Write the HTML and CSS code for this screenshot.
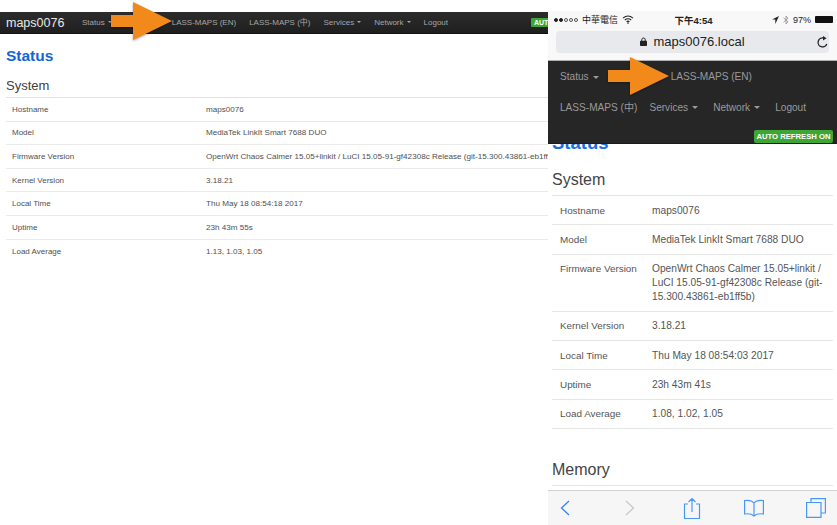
FILE: index.html
```html
<!DOCTYPE html>
<html lang="en">
<head>
<meta charset="utf-8">
<title>maps0076 status</title>
<link rel="stylesheet" href="styles.css">
</head>
<body>
<div class="stage">
  <section class="desktop">
    <nav class="dnav">
      <span class="brand">maps0076</span>
      <div class="dlinks">
        <span class="caret-item">Status</span>
        <span class="dgap">LASS-MAPS (EN)</span>
        <span>LASS-MAPS (中)</span>
        <span class="caret-item">Services</span>
        <span class="caret-item">Network</span>
        <span>Logout</span>
      </div>
      <span class="dbadge">AUTO REFRESH ON</span>
    </nav>
    <main class="dmain">
      <h1 class="dh1">Status</h1>
      <h2 class="dh2">System</h2>
      <div class="dtable">
        <div class="drow"><span class="dlabel">Hostname</span><span>maps0076</span></div>
        <div class="drow"><span class="dlabel">Model</span><span>MediaTek LinkIt Smart 7688 DUO</span></div>
        <div class="drow"><span class="dlabel">Firmware Version</span><span>OpenWrt Chaos Calmer 15.05+linkit / LuCI 15.05-91-gf42308c Release (git-15.300.43861-eb1ff5b)</span></div>
        <div class="drow"><span class="dlabel">Kernel Version</span><span>3.18.21</span></div>
        <div class="drow"><span class="dlabel">Local Time</span><span>Thu May 18 08:54:18 2017</span></div>
        <div class="drow"><span class="dlabel">Uptime</span><span>23h 43m 55s</span></div>
        <div class="drow"><span class="dlabel">Load Average</span><span>1.13, 1.03, 1.05</span></div>
      </div>
    </main>
    <svg class="arrow arrow-desktop" width="66" height="42" viewBox="0 0 66 42" aria-hidden="true"><path d="M2 15H24V2L63 21L24 40V27H2Z" fill="#f18a1b"/></svg>
  </section>

  <section class="phone">
    <div class="statusbar">
      <span class="sb-left"><span class="dots"><i class="on"></i><i class="on"></i><i></i><i></i><i></i></span>中華電信
        <svg width="12" height="9" viewBox="0 0 12 9" aria-hidden="true"><path d="M1 3.2C4 .6 8 .6 11 3.2M2.8 5C4.8 3.4 7.2 3.4 9.2 5M4.6 6.7C5.5 6 6.5 6 7.4 6.7" fill="none" stroke="#222" stroke-width="1.1"/><circle cx="6" cy="8.1" r=".8" fill="#222"/></svg>
      </span>
      <span class="sb-time">下午4:54</span>
      <span class="sb-right">
        <svg width="7" height="8" viewBox="0 0 7 8" aria-hidden="true"><path d="M7 0L0 3.4H3.3V8Z" fill="#222"/></svg>
        <svg width="6" height="10" viewBox="0 0 6 10" aria-hidden="true"><path d="M.5 2.8L5 6.8L3 9V1L5 3.2L.5 7.2" fill="none" stroke="#999" stroke-width=".9"/></svg>
        <span>97%</span>
        <span class="battery"></span>
      </span>
    </div>
    <div class="urlbar">
      <span class="url">
        <svg width="7" height="9" viewBox="0 0 8 10" aria-hidden="true"><path d="M2 4.5V3a2 2 0 0 1 4 0V4.5" fill="none" stroke="#222" stroke-width="1.1"/><rect y="4" width="8" height="6" rx=".8" fill="#222"/></svg>
        maps0076.local
      </span>
      <svg class="reload" width="12" height="12" viewBox="0 0 12 12" aria-hidden="true"><path d="M9.8 8A4.5 4.5 0 1 1 6.5 2" fill="none" stroke="#222" stroke-width="1.3"/><path d="M6 0L9.5 2.2L6 4.4Z" fill="#222"/></svg>
    </div>
    <nav class="mnav">
      <div class="mline">
        <span class="caret-item">Status</span>
        <span class="mgap">LASS-MAPS (EN)</span>
      </div>
      <div class="mline">
        <span class="mcjk">LASS-MAPS (中)</span>
        <span class="caret-item">Services</span>
        <span class="caret-item">Network</span>
        <span>Logout</span>
      </div>
      <div class="mbadge-row"><span class="mbadge">AUTO REFRESH ON</span></div>
    </nav>
    <main class="mmain">
      <h1 class="mh1">Status</h1>
      <h2 class="mh2">System</h2>
      <div class="mtable">
        <div class="mrow"><span class="mlabel">Hostname</span><span>maps0076</span></div>
        <div class="mrow"><span class="mlabel">Model</span><span>MediaTek LinkIt Smart 7688 DUO</span></div>
        <div class="mrow"><span class="mlabel">Firmware Version</span><span>OpenWrt Chaos Calmer 15.05+linkit / LuCI 15.05-91-gf42308c Release (git-15.300.43861-eb1ff5b)</span></div>
        <div class="mrow"><span class="mlabel">Kernel Version</span><span>3.18.21</span></div>
        <div class="mrow"><span class="mlabel">Local Time</span><span>Thu May 18 08:54:03 2017</span></div>
        <div class="mrow"><span class="mlabel">Uptime</span><span>23h 43m 41s</span></div>
        <div class="mrow"><span class="mlabel">Load Average</span><span>1.08, 1.02, 1.05</span></div>
      </div>
      <h2 class="mh2 memory">Memory</h2>
    </main>
    <div class="toolbar">
      <svg class="tb-back" width="20" height="16" viewBox="0 0 20 16" aria-hidden="true"><path d="M14 1L6.500 8L14 15" fill="none" stroke="#2f86f5" stroke-width="1.300"/></svg>
      <svg width="20" height="16" viewBox="0 0 20 16" aria-hidden="true"><path d="M6 1L13.500 8L6 15" fill="none" stroke="#c9c9c9" stroke-width="1.300"/></svg>
      <svg width="20" height="23" viewBox="0 0 20 23" aria-hidden="true"><path d="M6 7H2.500V21.500H17.500V7H14M10 15V1.500M6.500 5L10 1.500L13.500 5" fill="none" stroke="#4a97f7" stroke-width="1.200"/></svg>
      <svg width="20" height="19" viewBox="0 0 20 19" aria-hidden="true"><path d="M10 4C8 1.500 4 1 .6 1.500V15C4 14.500 8 15 10 17C12 15 16 14.500 19.400 15V1.500C16 1 12 1.500 10 4ZM10 4V17" fill="none" stroke="#4a97f7" stroke-width="1.200"/></svg>
      <svg width="20" height="20" viewBox="0 0 20 20" aria-hidden="true"><path d="M5 4.500V.6H19.400V15H15.500M.6 4.500H15V19.400H.6Z" fill="none" stroke="#4a97f7" stroke-width="1.200"/></svg>
    </div>
    <svg class="arrow arrow-phone" width="66" height="42" viewBox="0 0 66 42" aria-hidden="true"><path d="M2 15H24V2L63 21L24 40V27H2Z" fill="#f18a1b"/></svg>
  </section>
</div>
</body>
</html>
```
FILE: styles.css
```css
* { box-sizing: border-box; }
html, body { margin: 0; padding: 0; background: #fff; }
body { width: 837px; height: 525px; overflow: hidden; font-family: "Liberation Sans", "Noto Sans CJK TC", sans-serif; color: #444; }
h1, h2 { margin: 0; }
.stage { display: flex; width: 837px; height: 525px; }

.desktop { position: relative; width: 548px; height: 525px; overflow: hidden; padding-top: 12px; flex: none; }
.dnav { display: flex; align-items: center; height: 22px; background: linear-gradient(#2c2c2c, #1f1f1f); border-bottom: 1px solid #111; padding-left: 6px; white-space: nowrap; }
.brand { font-size: 12.500px; color: #e8e8e8; width: 76px; flex: none; }
.dlinks { display: flex; align-items: baseline; font-size: 8px; line-height: 10px; color: #a5a5a5; gap: 13px; flex: none; }
.dgap { margin-left: 47px; }
.dbadge { margin-left: 83px; flex: none; background: #3fa535; color: #fff; font-size: 7px; font-weight: 700; padding: 1px 3px; border-radius: 1px; }
.caret-item::after { content: ""; display: inline-block; margin-left: 3px; vertical-align: middle; border: 2px solid transparent; border-top-color: currentColor; border-bottom-width: 0; }

.dmain { padding: 12px 0 0 6px; }
.dh1 { font-size: 15.500px; line-height: 20px; color: #1464d6; }
.dh2 { font-size: 13px; line-height: 16px; font-weight: 400; color: #404040; margin-top: 12px; padding-bottom: 3px; border-bottom: 1px solid #e3e3e3; }
.drow { display: flex; height: 23.600px; align-items: center; border-bottom: 1px solid #eaeaea; font-size: 8.100px; color: #505050; white-space: nowrap; }
.drow:last-child { border-bottom: 0; }
.dlabel { width: 200px; padding-left: 6px; flex: none; font-size: 8px; }

.phone { position: relative; width: 289px; height: 525px; overflow: hidden; flex: none; padding-top: 11px; display: flex; flex-direction: column; }
.statusbar { display: flex; align-items: center; justify-content: space-between; height: 19px; background: #f8f8f8; padding: 0 4px 2px 6px; font-size: 9px; color: #222; flex: none; }
.sb-left, .sb-right { display: flex; align-items: center; gap: 4px; width: 100px; }
.sb-right { justify-content: flex-end; }
.sb-time { font-weight: 700; font-size: 9.500px; }
.dots { display: flex; gap: 1px; }
.dots i { width: 4px; height: 4px; border-radius: 50%; border: 1px solid #555; }
.dots i.on { background: #222; border-color: #222; }
.battery { width: 18px; height: 7px; background: #111; border-radius: 1px; }
.urlbar { position: relative; background: #f8f8f8; height: 31px; padding: 1px 8px 8px 8px; border-bottom: 1px solid #b0b0b0; flex: none; }
.url { display: flex; align-items: center; justify-content: center; gap: 6px; height: 22px; padding-bottom: 1px; background: #e8e9ec; border-radius: 4px; font-size: 13px; color: #222; }
.reload { position: absolute; right: 8px; top: 6px; }
.mnav { height: 83px; background: #262626; padding: 0 12px; color: #9a9a9a; font-size: 10.100px; flex: none; border-bottom: 1px solid #1a1a1a; white-space: nowrap; position: relative; z-index: 1; }
.mline { display: flex; align-items: baseline; gap: 15px; height: 30.500px; line-height: 12px; padding-top: 10px; }
.mline .caret-item::after { margin-left: 4px; border-width: 3px; border-bottom-width: 0; }
.mgap { margin-left: 57px; }
.mcjk { margin-right: -3px; }
.mbadge-row { display: flex; justify-content: flex-end; margin: 8px -8px 0 0; }
.mbadge { background: #3fa535; color: #fff; font-size: 7.700px; font-weight: 700; line-height: 13px; padding: 0 2px; border-radius: 2px; width: 79px; text-align: center; }
.mmain { flex: 1; padding: 0 4px; margin-top: -12px; overflow: hidden; }
.mh1 { font-size: 18.500px; line-height: 21px; color: #1a6fe0; }
.mh2 { font-size: 16px; line-height: 20px; font-weight: 400; color: #444; margin-top: 17px; padding-bottom: 5px; border-bottom: 1px solid #e6e6e6; }
.mrow { display: flex; align-items: flex-start; padding: 7.500px 0 6.800px 8px; border-bottom: 1px solid #e6e6e6; font-size: 10.200px; line-height: 14px; color: #555; min-height: 29px; }
.mlabel { width: 92px; flex: none; font-size: 9.900px; }
.memory { margin-top: 31px; }
.toolbar { display: flex; align-items: center; gap: 42px; height: 35px; background: #f6f6f6; border-top: 1px solid #d2d2d2; padding: 0 0 0 7px; flex: none; }
.tb-back { margin-right: 3px; }
.arrow { position: absolute; filter: drop-shadow(0 1px 1px rgba(0,0,0,.35)); z-index: 2; }
.arrow-desktop { left: 109px; top: 0; }
.arrow-phone { left: 58px; top: 55px; }
```
